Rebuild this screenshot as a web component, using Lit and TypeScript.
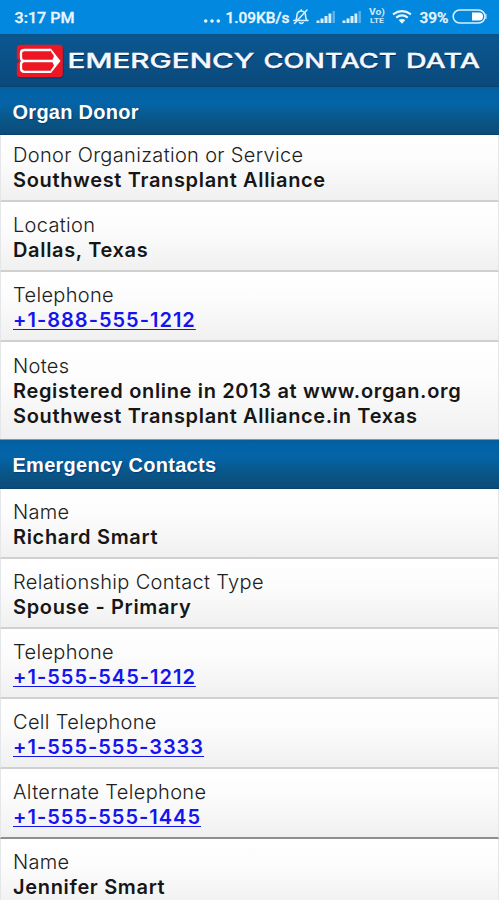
import { LitElement, html, css, svg } from "lit";
import { customElement, property } from "lit/decorators.js";

interface Row {
  label: string;
  lines: string[];
  link?: boolean;
  kind?: string;
}

const donor: Row[] = [
  { label: "Donor Organization or Service", lines: ["Southwest Transplant Alliance"], kind: "first" },
  { label: "Location", lines: ["Dallas, Texas"] },
  { label: "Telephone", lines: ["+1-888-555-1212"], link: true },
  {
    label: "Notes",
    lines: ["Registered online in 2013 at www.organ.org", "Southwest Transplant Alliance.in Texas"],
    kind: "notes",
  },
];

const contacts: Row[] = [
  { label: "Name", lines: ["Richard Smart"] },
  { label: "Relationship Contact Type", lines: ["Spouse - Primary"] },
  { label: "Telephone", lines: ["+1-555-545-1212"], link: true },
  { label: "Cell Telephone", lines: ["+1-555-555-3333"], link: true },
  { label: "Alternate Telephone", lines: ["+1-555-555-1445"], link: true, kind: "last" },
  { label: "Name", lines: ["Jennifer Smart"] },
];

@customElement("status-bar")
export class StatusBar extends LitElement {
  static styles = css`
    :host { display: block; height: 34px; background: #0288de; }
    svg { display: block; }
    text { font-family: Roboto, sans-serif; font-weight: 500; font-size: 14px; fill: #e9f6ff; stroke: #e9f6ff; stroke-width: 0.3; }
    .tiny { font-size: 7.5px; font-weight: 700; stroke: none; fill: #c9e8fb; }
  `;
  private bars(x: number) {
    return svg`<g transform="translate(${x} 0)">
      <rect x="0" y="20.5" width="3" height="2.5" fill="#d5eefc"/>
      <rect x="4" y="18.5" width="3" height="4.5" fill="#d5eefc"/>
      <rect x="8" y="16" width="3" height="7" fill="#d5eefc"/>
      <rect x="12" y="13.5" width="2.8" height="9.5" fill="#d5eefc"/>
      <rect x="16" y="11" width="2.4" height="12" fill="#5bb4ec"/></g>`;
  }
  render() {
    return html`<svg width="499" height="34" viewBox="0 0 499 34">
      <text x="14.5" y="22.5" textLength="60" lengthAdjust="spacingAndGlyphs">3:17 PM</text>
      <g fill="#e9f6ff"><circle cx="205.7" cy="21" r="1.8"/><circle cx="212" cy="21" r="1.8"/><circle cx="218.3" cy="21" r="1.8"/></g>
      <text x="225.5" y="22.5" textLength="64" lengthAdjust="spacingAndGlyphs">1.09KB/s</text>
      <g fill="none" stroke="#d5eefc" stroke-width="1.6" stroke-linecap="round" stroke-linejoin="round">
        <path d="M293.8 20.5H308M296 20c1.200-2 .5-4.500 1.200-6.300 1.600-3.600 6.600-3.600 8 0 .7 2-.1 4.300 1.600 6.300M299.500 22.500q1.800 1.800 3.600 0M301.200 10.700v-1"/>
        <path d="M294.500 23.500 307 10"/>
      </g>
      ${this.bars(316.5)} ${this.bars(342.5)}
      <g transform="translate(369 0) scale(1 1.2)">
        <text class="tiny" x="0" y="12.200" textLength="16" lengthAdjust="spacingAndGlyphs">Vo)</text>
      </g>
      <text class="tiny" x="370" y="23.4" textLength="14" lengthAdjust="spacingAndGlyphs">LTE</text>
      <g fill="none" stroke="#e9f6ff" stroke-width="2.1">
        <path d="M393 14.3q9-6.400 18 0M396.200 17.600q5.800-4.300 11.600 0"/>
      </g>
      <path d="M398.600 20q3.400-2 6.800 0L402 23.800z" fill="#e9f6ff"/>
      <text x="419.5" y="22.5" textLength="29" lengthAdjust="spacingAndGlyphs">39%</text>
      <rect x="453.2" y="10" width="31.8" height="13" rx="6.5" fill="none" stroke="#d8effd" stroke-width="1.6"/>
      <path d="M472 12.5h7a4 4 0 0 1 0 8H472z" fill="#fff"/>
      <path d="M486 14v5" stroke="#d8effd" stroke-width="1"/>
    </svg>`;
  }
}

@customElement("title-bar")
export class TitleBar extends LitElement {
  static styles = css`
    :host { display: block; height: 53px; background: linear-gradient(#0b5288, #0a5690 8%, #0b4a7c 96%, #0a4170); }
    svg { display: block; }
    .title { font-family: Inter, sans-serif; font-weight: 500; font-size: 20px; fill: #f4f8ff; stroke: #f4f8ff; stroke-width: 0.35; }
    .shade { fill: #06294e; stroke: #06294e; }
  `;
  private words(cls: string, dx: number, dy: number) {
    return svg`<g transform="translate(${dx} ${dy})">
      <text class=${cls} x="67.5" y="34.2" textLength="187" lengthAdjust="spacingAndGlyphs">EMERGENCY</text>
      <text class=${cls} x="263.5" y="34.2" textLength="133" lengthAdjust="spacingAndGlyphs">CONTACT</text>
      <text class=${cls} x="406" y="34.2" textLength="74" lengthAdjust="spacingAndGlyphs">DATA</text>
    </g>`;
  }
  render() {
    return html`<svg width="499" height="53" viewBox="0 0 499 53">
      <rect x="17.5" y="12.5" width="46" height="32" rx="4" fill="#082f59" opacity=".7"/>
      <rect x="16.8" y="10.8" width="46" height="32.5" rx="3.5" fill="#ee1622"/>
      <path d="M16.5 24.5l3 2.5-3 2.5z" fill="#0b4f84"/>
      <path d="M50 16H24.5Q21 16 21 19V23.500Q21 26.800 24 27 21 27.200 21 30.500V34.500Q21 37.800 24.500 37.800H50M24 27H54" fill="none" stroke="#fff" stroke-width="2.3" stroke-linejoin="round"/>
      <path d="M49 14.850H51L60.500 27 51 38.950H49L54 31.500 52 27 54 22z" fill="#fff"/>
      ${this.words("title shade", 0.8, 1.3)} ${this.words("title", 0, 0)}
    </svg>`;
  }
}

@customElement("record-section")
export class RecordSection extends LitElement {
  @property() heading = "";
  @property({ attribute: false }) rows: Row[] = [];
  @property({ type: Boolean }) second = false;

  static styles = css`
    :host { display: block; font-family: Inter, "Liberation Sans", sans-serif; }
    .heading {
      box-sizing: border-box; height: 48px; padding: 0 12.5px;
      font: 700 20px/50px "Liberation Sans", sans-serif; letter-spacing: 0.27px; color: #fff;
      background: linear-gradient(#0a5c98, #0262a6 8%, #0464a6 35%, #095586 70%, #0c4c7b 96%, #0a3f69);
      text-shadow: 1px 1px 1px #073f7c;
    }
    .heading.second { height: 50px; line-height: 51px; border-top: 1px solid #8796a3; }
    .row {
      box-sizing: border-box; height: 70px; padding: 11px 12.5px 0 12px; color: #161616;
      background: linear-gradient(#fff, #fcfcfc 40%, #f0f0f0); border-bottom: 2px solid #d0d0d0;
      border-left: 1px solid #e4e7e9; border-right: 1px solid #e4e7e9;
      overflow: hidden;
    }
    .first { height: 67px; padding-top: 8px; }
    .notes { height: 97px; padding-top: 12px; border-bottom: 0; }
    .notes .value { line-height: 24.6px; }
    .last { border-bottom: 2px solid #8c8e90; }
    .label { font-size: 20px; line-height: 25px; font-weight: 300; letter-spacing: 0.33px; white-space: nowrap; color: #202020; }
    .value { font-size: 20px; line-height: 25px; font-weight: 600; letter-spacing: 0.66px; white-space: nowrap; }
    .value a { color: #1414ee; letter-spacing: 1px; text-decoration: underline; text-decoration-thickness: 1.2px; text-underline-offset: 2px; text-decoration-skip-ink: none; }
  `;
  render() {
    return html`<div class="heading ${this.second ? "second" : ""}">${this.heading}</div>
      ${this.rows.map(
        (r) => html`<div class="row ${r.kind ?? ""}">
          <div class="label">${r.label}</div>
          ${r.lines.map((l) => html`<div class="value">${r.link ? html`<a href="tel:${l}">${l}</a>` : l}</div>`)}
        </div>`
      )}`;
  }
}

@customElement("app-root")
export class AppRoot extends LitElement {
  static styles = css`
    :host { display: block; height: 900px; overflow: hidden; background: #fff; }
  `;
  render() {
    return html`<status-bar></status-bar>
      <title-bar></title-bar>
      <record-section heading="Organ Donor" .rows=${donor}></record-section>
      <record-section heading="Emergency Contacts" second .rows=${contacts}></record-section>`;
  }
}
